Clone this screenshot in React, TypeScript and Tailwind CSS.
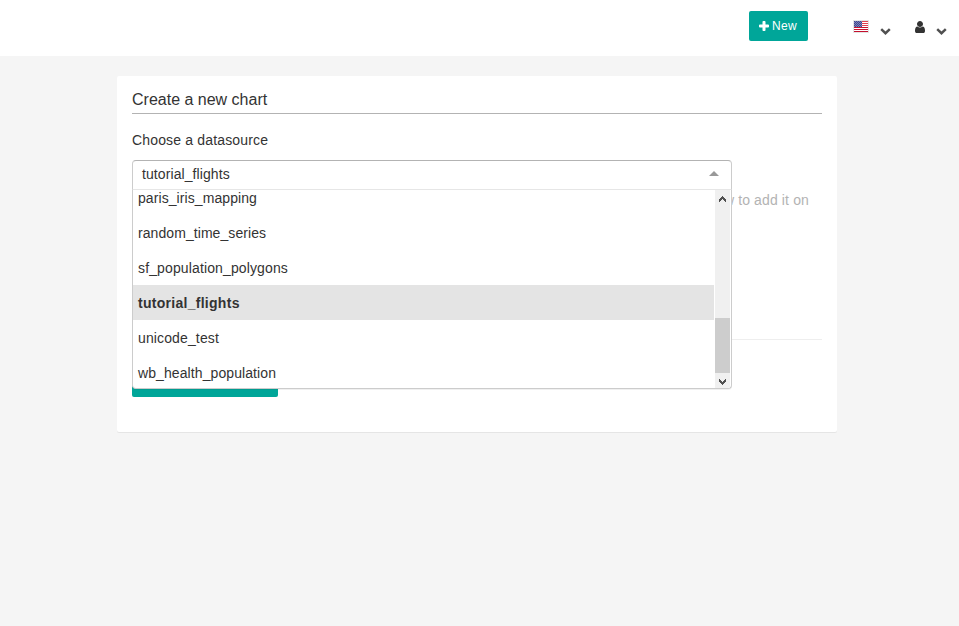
import React from "react";

const items = [
  { name: "paris_iris_mapping", tracking: "tracking-[0.08px]" },
  { name: "random_time_series", tracking: "tracking-[0.07px]" },
  { name: "sf_population_polygons", tracking: "tracking-[0.13px]" },
  { name: "tutorial_flights", tracking: "tracking-[0.28px]" },
  { name: "unicode_test", tracking: "tracking-[0.13px]" },
  { name: "wb_health_population", tracking: "tracking-[0.09px]" },
];

const selected = "tutorial_flights";

function PlusIcon() {
  return (
    <svg className="mb-px h-[10px] w-[10px]" viewBox="0 0 10 10" fill="currentColor">
      <path d="M3.500 1Q3.500 0 4.300 0h1.400q.8 0 .8 1v2.500H9q1 0 1 .8v1.400q0 .8-1 .8H6.500V9q0 1-.8 1H4.300q-.8 0-.8-1V6.500H1q-1 0-1-.8V4.300q0-.8 1-.8h2.500z" />
    </svg>
  );
}

function ChevronIcon() {
  return (
    <svg className="h-[7px] w-[11px]" viewBox="0 0 11 7" fill="none">
      <path d="M1.200 1.200L5.500 5.200L9.800 1.200" stroke="#505050" strokeWidth="2.500" />
    </svg>
  );
}

function UserIcon() {
  return (
    <svg className="h-[12px] w-[10px]" viewBox="0 128 1280 1536" preserveAspectRatio="none" fill="#333333">
      <path d="M1280 1399q0 109-62.5 187t-150.5 78h-854q-88 0-150.500-78t-62.500-187q0-85 8.500-160.500t31.500-152 58.500-131 94-89 134.500-34.500q131 128 313 128t313-128q76 0 134.500 34.500t94 89 58.500 131 31.500 152 8.500 160.500zm-256-887q0 159-112.500 271.500t-271.500 112.500-271.500-112.500-112.500-271.500 112.500-271.500 271.500-112.500 271.500 112.500 112.500 271.500z" />
    </svg>
  );
}

function FlagIcon() {
  return (
    <svg className="h-[14px] w-[16px]" viewBox="0 0 16 14" shapeRendering="crispEdges">
      <rect width="16" height="13" rx="1" fill="#e4e4e4" />
      <rect x="1" y="1" width="14" height="11" fill="#ffffff" />
      {[1, 3, 5, 7, 9, 11].map((y) => (
        <rect key={y} x="1" y={y} width="14" height="1" fill={y > 6 ? "#c4102e" : "#e2404f"} />
      ))}
      <rect x="1" y="1" width="8" height="6" fill="#3f4690" />
      {[1, 2, 3, 4, 5, 6].map((y) =>
        [0, 2, 4, 6].map((x) => (
          <rect key={`${x}-${y}`} x={1 + x + (y % 2)} y={y} width="1" height="1" fill="#7d83b6" />
        )),
      )}
    </svg>
  );
}

function ScrollArrow({ down = false }: { down?: boolean }) {
  return (
    <svg className="h-[6px] w-[7px]" viewBox="0 0 7 6" fill="#505050" shapeRendering="crispEdges">
      <path
        d={
          down
            ? "M0 0h1v1h1v1h1v1h1V2h1V1h1V0h1v3H6v1H5v1H4v1H3V5H2V4H1V3H0z"
            : "M3 0h1v1h1v1h1v1h1v3H6V5H5V4H4V3H3v1H2v1H1v1H0V3h1V2h1V1h1z"
        }
      />
    </svg>
  );
}

function Header() {
  return (
    <header className="flex h-14 items-start bg-white pl-[749px]">
      <button className="mt-[11px] flex h-[30px] w-[59px] shrink-0 items-center rounded-[2px] bg-[#00a699] pl-[10px] text-[12px] leading-[18px] text-white">
        <PlusIcon />
        <span className="ml-[3px] tracking-[0.3px]">New</span>
      </button>
      <div className="mt-5 ml-[45px] flex shrink-0">
        <FlagIcon />
        <span className="mt-2 ml-[11px]"><ChevronIcon /></span>
      </div>
      <div className="mt-[21px] ml-[24px] flex shrink-0">
        <UserIcon />
        <span className="mt-[7px] ml-[11px]"><ChevronIcon /></span>
      </div>
    </header>
  );
}

function Menu() {
  return (
    <div className="absolute top-[29px] left-0 flex h-[200px] w-[600px] overflow-hidden rounded-b-[4px] border border-[#cccccc] border-t-[#e6e6e6] bg-white shadow-[0_1px_0_rgba(0,0,0,0.06)]">
      <div className="w-[581px] shrink-0 overflow-hidden">
        <ul className="-mt-[10px]">
          {items.map(({ name, tracking }) => (
            <li
              key={name}
              className={
                name === selected
                  ? `h-[35px] bg-[#e4e4e4] pl-[5px] leading-[36px] font-bold ${tracking}`
                  : `h-[35px] pl-[5px] leading-[36px] ${tracking}`
              }
            >
              {name}
            </li>
          ))}
        </ul>
      </div>
      <div className="ml-px flex h-full w-[15px] shrink-0 flex-col items-center bg-[#f0f0f0]">
        <div className="mt-[6px] h-[122px]"><ScrollArrow /></div>
        <div className="h-[55px] w-full bg-[#cdcdcd]" />
        <div className="mt-[6px]"><ScrollArrow down /></div>
      </div>
    </div>
  );
}

export default function App() {
  return (
    <div className="h-[626px] w-[959px] overflow-hidden bg-[#f5f5f5] font-['Liberation_Sans',Arial,sans-serif] text-[14px] text-[#333333]">
      <Header />
      <main className="mt-5 ml-[117px] h-[356px] w-[720px] rounded-[2px] bg-white px-[15px] shadow-[0_1px_0_#e5e5e5]">
        <h1 className="h-[38px] border-b border-[#b3b3b3] pt-[12px] text-[16px] leading-[23px]">Create a new chart</h1>
        <p className="mt-[16px] leading-5 tracking-[0.16px]">Choose a datasource</p>
        <div className="relative z-10 mt-[10px] h-[30px] w-[600px] rounded-t-[4px] border border-b-0 border-[#b3b3b3] border-r-[#cccccc] border-l-[#cccccc] bg-white">
          <div className="flex h-full justify-between pr-3 pl-[9px]">
            <span className="leading-[27px] tracking-[0.09px]">tutorial_flights</span>
            <svg className="mt-[10px] h-[5px] w-[10px]" viewBox="0 0 10 5" fill="#999999">
              <path d="M0 5L5 0L10 5z" />
            </svg>
          </div>
          <div className="absolute -top-px -left-px"><Menu /></div>
        </div>
        <p className="pr-[13px] text-right leading-5 tracking-[0.13px] text-[#b3b3b3]">w to add it on</p>
        <hr className="mt-[129px] border-[#eeeeee]" />
        <button className="mt-[27px] block h-[30px] w-[146px] rounded-[2px] bg-[#00a699]" />
      </main>
    </div>
  );
}
